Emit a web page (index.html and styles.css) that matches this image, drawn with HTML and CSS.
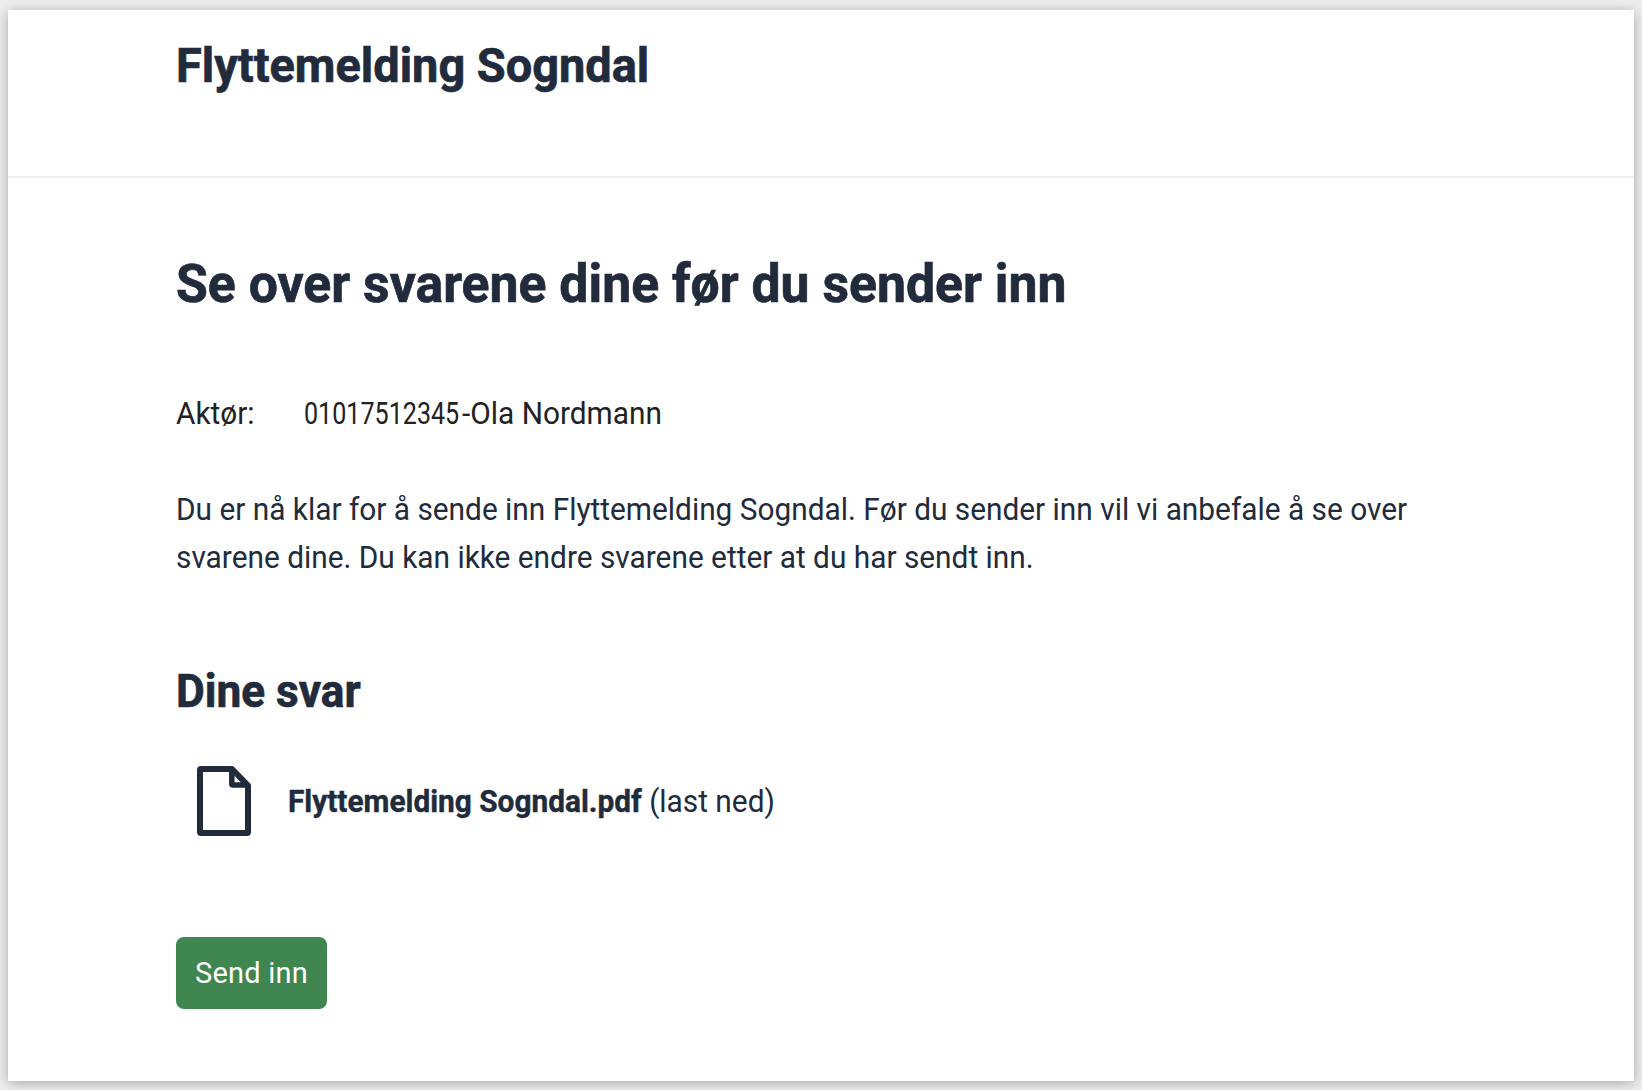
FILE: index.html
```html
<!DOCTYPE html>
<html lang="nb">
<head>
<meta charset="utf-8">
<title>Flyttemelding Sogndal</title>
<link rel="stylesheet" href="styles.css">
</head>
<body>
<main class="card">
  <header class="card-header"><h1 class="app-title">Flyttemelding Sogndal</h1></header>
  <section class="content">
    <h2 class="page-title">Se over svarene dine før du sender inn</h2>
    <dl class="actor"><dt>Aktør:</dt><dd><span class="actor-id">01017512345</span><span class="actor-name">-Ola Nordmann</span></dd></dl>
    <p class="intro">Du er nå klar for å sende inn Flyttemelding Sogndal. Før du sender inn vil vi anbefale å se over<br>svarene dine. Du kan ikke endre svarene etter at du har sendt inn.</p>
    <h3 class="answers-title">Dine svar</h3>
    <a class="file">
      <svg class="file-icon" width="54" height="70" viewBox="0 0 54 70" fill="none" stroke="currentColor" stroke-width="6" stroke-linejoin="round"><path d="M4 3H35L51 19.500V66Q51 67 50 67H4Q3 67 3 66V4Q3 3 4 3Z"/><path stroke-width="5.500" d="M34.800 3V18Q34.800 19 35.800 19H51"/></svg>
      <span class="file-label"><strong>Flyttemelding Sogndal.pdf</strong> <span class="hint">(last ned)</span></span>
    </a>
    <button class="submit" type="button">Send inn</button>
  </section>
</main>
</body>
</html>
```
FILE: styles.css
```css
* { box-sizing: border-box; }
body { margin: 0; height: 1090px; padding: 10px 8px 9px; background: #eee; font-family: Roboto, sans-serif; color: #212b3c; overflow: hidden; }
h1, h2, h3, p, dl, dd { margin: 0; }
.card { height: 1071px; background: #fff; box-shadow: 0 2px 12px rgba(0, 0, 0, .3); }
.card-header { height: 168px; padding: 26px 168px 0; border-bottom: 2px solid #eee; }
.content { padding: 73px 168px 0; display: flex; flex-direction: column; align-items: flex-start; }

/* Slightly condensed lettering */
.app-title, .page-title, .actor dt, .actor-id, .actor-name, .intro, .answers-title, .file-label { transform: scaleX(.962); transform-origin: left center; white-space: nowrap; }
.app-title, .page-title, .answers-title { -webkit-text-stroke: .7px currentColor; }

.app-title { font-size: 49px; line-height: 60px; transform: scaleX(.9575); }
.page-title { font-size: 54px; line-height: 66px; transform: scaleX(.958); }
.actor { display: flex; margin-top: 73px; font-size: 31px; line-height: 48px; color: #222; }
.actor dt { width: 128px; }
.actor dd { display: flex; }
.actor-id { width: 158px; transform: scaleX(.81); }
.intro { margin-top: 48px; font-size: 31px; line-height: 48px; }
.answers-title { margin-top: 79px; font-size: 47px; line-height: 60px; transform: scaleX(.94); }
.file { display: flex; align-items: center; margin-top: 45px; padding-left: 21px; gap: 37px; font-size: 31px; line-height: 48px; }
.file-label { padding-top: 2px; }
.file-label strong { -webkit-text-stroke: .4px currentColor; }
.submit { margin-top: 101px; width: 151px; height: 72px; border: 0; border-radius: 8px; background: #3f8650; color: #fff; font: 29px/40px Roboto, sans-serif; letter-spacing: .2px; white-space: nowrap; }
```
